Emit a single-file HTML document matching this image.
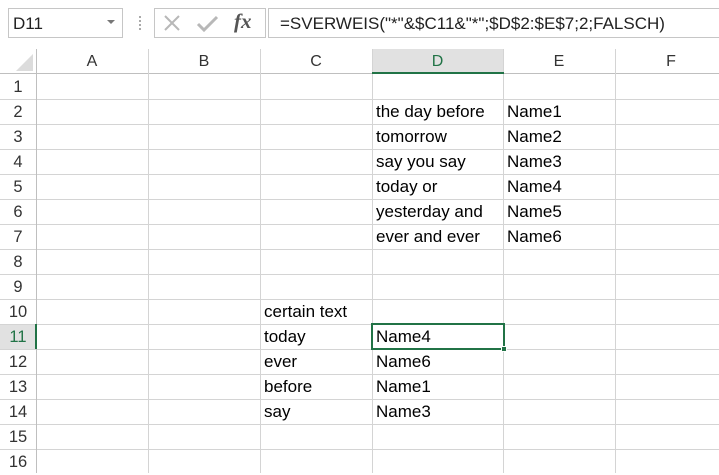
<!DOCTYPE html>
<html><head><meta charset="utf-8"><style>
*{margin:0;padding:0;box-sizing:border-box}
body{width:719px;height:473px;overflow:hidden;background:#fff;font-family:"Liberation Sans",sans-serif;color:#000;position:relative}
.a{position:absolute}
.box{border:1px solid #c6c6c6;background:#fff}
.hl{position:absolute;left:0;width:719px;height:1px;background:#d4d4d4}
.vl{position:absolute;top:49px;width:1px;height:424px;background:#d4d4d4}
.ch{position:absolute;top:49px;height:25px;line-height:26px;text-align:center;font-size:16px;color:#333}
.rh{position:absolute;left:0;width:36px;height:25px;line-height:26px;text-align:center;font-size:16.5px;color:#333}
.c{position:absolute;height:25px;line-height:26px;font-size:17px;white-space:nowrap}
</style></head><body>
<div class="a box" style="left:8px;top:8px;width:115px;height:30px;font-size:17px;line-height:29px;padding-left:4px;color:#222">D11</div>
<div class="a" style="left:107px;top:20px;width:0;height:0;border-left:4px solid transparent;border-right:4px solid transparent;border-top:4px solid #777"></div>
<div class="a" style="left:139px;top:16px;width:2px;height:14px;border-left:2px dotted #aaa"></div>
<div class="a box" style="left:154px;top:8px;width:112px;height:30px"></div>
<svg class="a" style="left:163px;top:13px" width="90" height="22">
<path d="M2 3 L16 17 M16 3 L2 17" stroke="#b8b8b8" stroke-width="2" fill="none"/>
<path d="M35 11 L41 17 L54 4" stroke="#b8b8b8" stroke-width="3" fill="none"/>
</svg>
<div class="a" style="left:234px;top:9px;font-family:'Liberation Serif',serif;font-style:italic;font-weight:bold;font-size:21px;color:#555">fx</div>
<div class="a box" style="left:268px;top:8px;width:460px;height:30px;font-size:17px;line-height:29px;padding-left:11px;color:#222">=SVERWEIS("*"&amp;$C11&amp;"*";$D$2:$E$7;2;FALSCH)</div>
<svg class="a" style="left:16px;top:54px" width="18" height="18"><path d="M17 0 L17 17 L0 17Z" fill="#dcdcdc"/></svg>
<div class="a" style="left:372px;top:49px;width:132px;height:25px;background:#e1e1e1"></div>
<div class="a" style="left:0;top:324px;width:36px;height:25px;background:#e1e1e1"></div>
<div class="hl" style="top:73px;background:#bfbfbf"></div>
<div class="hl" style="top:99px"></div><div class="hl" style="top:124px"></div><div class="hl" style="top:149px"></div><div class="hl" style="top:174px"></div><div class="hl" style="top:199px"></div><div class="hl" style="top:224px"></div><div class="hl" style="top:249px"></div><div class="hl" style="top:274px"></div><div class="hl" style="top:299px"></div><div class="hl" style="top:324px"></div><div class="hl" style="top:349px"></div><div class="hl" style="top:374px"></div><div class="hl" style="top:399px"></div><div class="hl" style="top:424px"></div><div class="hl" style="top:449px"></div>
<div class="vl" style="left:36px;background:#bfbfbf"></div><div class="vl" style="left:148px"></div><div class="vl" style="left:260px"></div><div class="vl" style="left:372px"></div><div class="vl" style="left:503px"></div><div class="vl" style="left:615px"></div>
<div class="a" style="left:372px;top:72px;width:132px;height:2px;background:#217346"></div>
<div class="a" style="left:35px;top:324px;width:2px;height:25px;background:#217346"></div>
<div class="ch" style="left:36px;width:112px">A</div><div class="ch" style="left:148px;width:112px">B</div><div class="ch" style="left:260px;width:112px">C</div><div class="ch" style="left:372px;width:131px;color:#217346">D</div><div class="ch" style="left:503px;width:112px">E</div><div class="ch" style="left:615px;width:112px">F</div>
<div class="rh" style="top:74px">1</div><div class="rh" style="top:99px">2</div><div class="rh" style="top:124px">3</div><div class="rh" style="top:149px">4</div><div class="rh" style="top:174px">5</div><div class="rh" style="top:199px">6</div><div class="rh" style="top:224px">7</div><div class="rh" style="top:249px">8</div><div class="rh" style="top:274px">9</div><div class="rh" style="top:299px">10</div><div class="rh" style="top:324px;color:#217346">11</div><div class="rh" style="top:349px">12</div><div class="rh" style="top:374px">13</div><div class="rh" style="top:399px">14</div><div class="rh" style="top:424px">15</div><div class="rh" style="top:449px">16</div>
<div class="c" style="left:376px;top:99px">the day before</div><div class="c" style="left:507px;top:99px">Name1</div>
<div class="c" style="left:376px;top:124px">tomorrow</div><div class="c" style="left:507px;top:124px">Name2</div>
<div class="c" style="left:376px;top:149px">say you say</div><div class="c" style="left:507px;top:149px">Name3</div>
<div class="c" style="left:376px;top:174px">today or</div><div class="c" style="left:507px;top:174px">Name4</div>
<div class="c" style="left:376px;top:199px">yesterday and</div><div class="c" style="left:507px;top:199px">Name5</div>
<div class="c" style="left:376px;top:224px">ever and ever</div><div class="c" style="left:507px;top:224px">Name6</div>
<div class="c" style="left:264px;top:299px">certain text</div>
<div class="c" style="left:264px;top:324px">today</div><div class="c" style="left:376px;top:324px">Name4</div>
<div class="c" style="left:264px;top:349px">ever</div><div class="c" style="left:376px;top:349px">Name6</div>
<div class="c" style="left:264px;top:374px">before</div><div class="c" style="left:376px;top:374px">Name1</div>
<div class="c" style="left:264px;top:399px">say</div><div class="c" style="left:376px;top:399px">Name3</div>
<div class="a" style="left:371px;top:323px;width:134px;height:27px;border:2px solid #217346"></div>
<div class="a" style="left:501px;top:346px;width:6px;height:6px;background:#217346;border:1px solid #fff"></div>
</body></html>
